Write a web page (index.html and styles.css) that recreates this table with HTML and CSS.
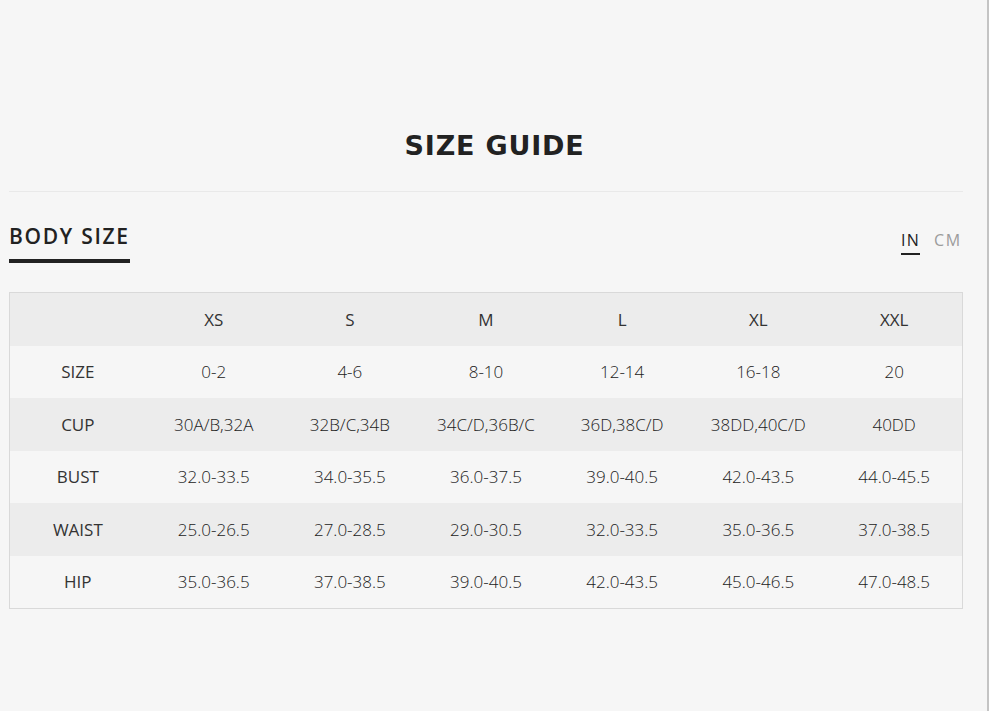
FILE: index.html
```html
<!DOCTYPE html>
<html>
<head>
<meta charset="utf-8">
<link rel="stylesheet" href="styles.css">
</head>
<body>
<h1 class="title">SIZE GUIDE</h1>
<div class="page">
  <div class="divider"></div>
  <div class="tabs">
    <div class="tab-active">BODY SIZE</div>
    <div class="units">
      <span class="unit unit-on">IN</span>
      <span class="unit">CM</span>
    </div>
  </div>
  <table class="chart">
    <tr class="row-gray"><td></td><td class="hd">XS</td><td class="hd">S</td><td class="hd">M</td><td class="hd">L</td><td class="hd">XL</td><td class="hd">XXL</td></tr>
    <tr class="row-light"><td class="hd">SIZE</td><td>0-2</td><td>4-6</td><td>8-10</td><td>12-14</td><td>16-18</td><td>20</td></tr>
    <tr class="row-gray"><td class="hd">CUP</td><td>30A/B,32A</td><td>32B/C,34B</td><td>34C/D,36B/C</td><td>36D,38C/D</td><td>38DD,40C/D</td><td>40DD</td></tr>
    <tr class="row-light"><td class="hd">BUST</td><td>32.0-33.5</td><td>34.0-35.5</td><td>36.0-37.5</td><td>39.0-40.5</td><td>42.0-43.5</td><td>44.0-45.5</td></tr>
    <tr class="row-gray"><td class="hd">WAIST</td><td>25.0-26.5</td><td>27.0-28.5</td><td>29.0-30.5</td><td>32.0-33.5</td><td>35.0-36.5</td><td>37.0-38.5</td></tr>
    <tr class="row-light"><td class="hd">HIP</td><td>35.0-36.5</td><td>37.0-38.5</td><td>39.0-40.5</td><td>42.0-43.5</td><td>45.0-46.5</td><td>47.0-48.5</td></tr>
  </table>
</div>
</body>
</html>
```
FILE: styles.css
```css
html, body {
  margin: 0;
  padding: 0;
  background: #f6f6f6;
  height: 100%;
}
body {
  font-family: "Open Sans", "Liberation Sans", sans-serif;
  color: #222;
  border-right: 2px solid #c4c4c4;
  box-sizing: border-box;
  overflow: hidden;
  padding-top: 122px;
}
.title {
  margin: 0;
  padding-left: 2px;
  text-align: center;
  font-family: "DejaVu Sans", "Open Sans", sans-serif;
  font-size: 27px;
  font-weight: 700;
  letter-spacing: 0.8px;
  line-height: 48px;
  color: #222;
}
.page {
  width: 954px;
  margin-left: 9px;
}
.divider {
  margin-top: 21px;
  height: 1px;
  background: #e9e9e9;
}
.tabs {
  display: flex;
  justify-content: space-between;
  align-items: flex-start;
  margin-top: 29px;
}
.tab-active {
  font-size: 21px;
  font-weight: 600;
  letter-spacing: 1.7px;
  line-height: 30px;
  padding-bottom: 8px;
  border-bottom: 4px solid #222;
  margin-right: -1px;
}
.units {
  display: flex;
  gap: 15px;
  margin-top: 8px;
  margin-right: 1px;
}
.unit {
  font-size: 16px;
  letter-spacing: 1.8px;
  color: #9c9c9c;
  line-height: 22px;
}
.unit-on {
  color: #222;
  border-bottom: 2px solid #222;
  padding-bottom: 2px;
  letter-spacing: 1.2px;
  margin-right: -1px;
}
.chart {
  margin-top: 29px;
  width: 954px;
  border-collapse: collapse;
  border: 1px solid #d9d9d9;
  table-layout: fixed;
}
.chart td {
  height: 52.5px;
  padding: 0;
  text-align: center;
  font-size: 17px;
  font-weight: 300;
  color: #222;
  letter-spacing: 0px;
}
.chart td.hd {
  font-weight: 400;
  color: #333;
}
.row-gray td {
  background: #ececec;
}
.row-light td {
  background: #f6f6f6;
}
```
